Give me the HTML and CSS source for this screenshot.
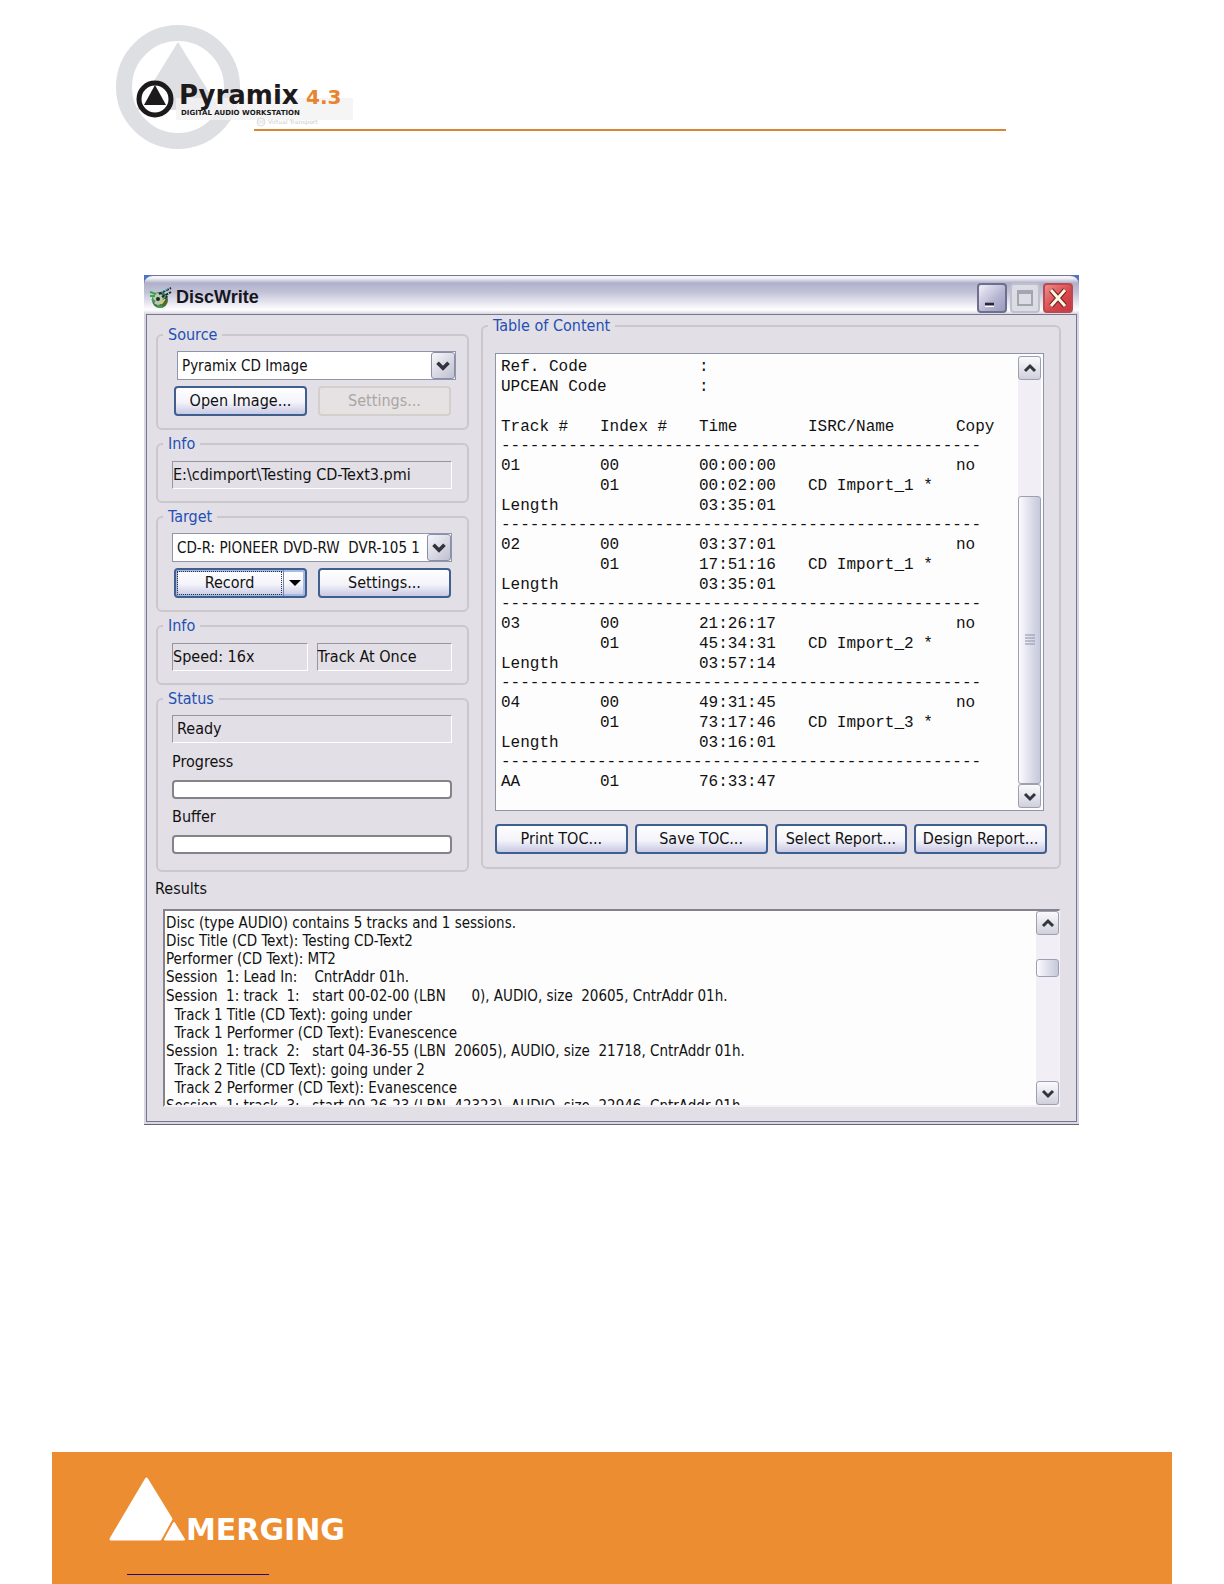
FILE: index.html
```
<!DOCTYPE html>
<html lang="en">

<head>
    <meta charset="UTF-8">
    <meta name="viewport" content="width=device-width, initial-scale=1.0">
    <title>Pyramix 4.3 - DiscWrite</title>
    <link rel="stylesheet" href="styles.css">
</head>

<body>
    <header class="page-header">
        <svg class="logo" width="138" height="125" viewBox="0 0 138 125" role="img" aria-label="Pyramix 4.3">
            <circle cx="62" cy="63" r="54" fill="none" stroke="#dedfe3" stroke-width="16" />
            <path d="M62 18 L104 86 H20 Z" fill="#dedfe3" />
            <rect x="60" y="74" width="177" height="22" fill="#f3f3f4" opacity="0.8" />
            <circle cx="39" cy="75" r="16" fill="#fff" stroke="#1c1a1b" stroke-width="5" />
            <path d="M39 61 L50 81 H28 Z" fill="#1c1a1b" />
            <text class="logo-name" x="63" y="80">Pyramix</text>
            <text class="logo-version" x="190" y="80">4.3</text>
            <text class="logo-tag" x="65" y="91">DIGITAL AUDIO WORKSTATION</text>
            <circle cx="145" cy="98" r="4" fill="none" stroke="#dcdcdc" />
            <path d="M143 96 V100 M145 96 V100 M147 96 V100" stroke="#e0e0e0" />
            <text class="logo-ghost" x="152" y="100">Virtual Transport</text>
        </svg>
        <div class="rule"></div>
    </header>

    <main class="window">
        <div class="title-back">
            <div class="titlebar">
                <svg width="24" height="24" viewBox="0 0 24 24">
                    <ellipse cx="11" cy="14" rx="8" ry="8" fill="#4d6a3c" />
                    <ellipse cx="9" cy="13" rx="5" ry="6" fill="#b9c9b4" />
                    <circle cx="9" cy="13" r="2" fill="#1d2b1d" />
                    <path d="M1 6 L7 8 M1 10 H6 M3 13 L6 16 M8 20 L14 21" stroke="#36a552" stroke-width="2" />
                    <path d="M10 8 L22 2 M13 11 L22 6 M15 15 L18 10" stroke="#172b28" stroke-width="2" stroke-dasharray="3 1" />
                    <path d="M12 6 L19 3 M14 13 L17 9" stroke="#37b5bf" stroke-width="1" />
                    <path d="M12 18 L16 13" stroke="#d9cf5c" stroke-width="2" />
                </svg>
                <h1>DiscWrite</h1>
                <button class="win-btn" aria-label="Minimize">
                    <svg width="26" height="26" viewBox="0 0 26 26"><path d="M6 19.500 H15" stroke="#fff" stroke-width="5" /><path d="M6 19 H15" stroke="#26263f" stroke-width="3" /></svg>
                </button>
                <button class="win-btn off" aria-label="Maximize" disabled>
                    <svg width="26" height="26" viewBox="0 0 26 26"><path d="M6 6 H20 V20 H6 Z M6 8 H20" fill="none" stroke="#a4a5b0" stroke-width="2" /></svg>
                </button>
                <button class="win-btn close" aria-label="Close">
                    <svg width="26" height="26" viewBox="0 0 26 26"><path d="M6 5 L20 21 M20 5 L6 21" stroke="#6b2020" stroke-width="5" /><path d="M6 5 L20 21 M20 5 L6 21" stroke="#fff6e6" stroke-width="3" /></svg>
                </button>
            </div>
        </div>

        <div class="body">
            <div class="columns">
                <div class="left">
                    <fieldset>
                        <legend>Source</legend>
                        <div class="combo wide">
                            <select aria-label="Source">
                                <option>Pyramix CD Image</option>
                            </select>
                            <svg class="drop" width="24" height="26" viewBox="0 0 24 26"><path d="M6 10 L12 16 L18 10" /></svg>
                        </div>
                        <div class="buttons">
                            <button class="btn">Open Image...</button>
                            <button class="btn" disabled>Settings...</button>
                        </div>
                    </fieldset>

                    <fieldset class="info">
                        <legend>Info</legend>
                        <div class="field">E:\cdimport\Testing CD-Text3.pmi</div>
                    </fieldset>

                    <fieldset>
                        <legend>Target</legend>
                        <div class="combo">
                            <select aria-label="Target">
                                <option>CD-R: PIONEER DVD-RW&nbsp; DVR-105 1</option>
                            </select>
                            <svg class="drop" width="24" height="26" viewBox="0 0 24 26"><path d="M6 10 L12 16 L18 10" /></svg>
                        </div>
                        <div class="buttons">
                            <div class="split">
                                <button class="record"><span>Record</span></button>
                                <button class="more" aria-label="Record options">
                                    <svg width="12" height="6" viewBox="0 0 12 6"><path d="M0 0 H12 L6 6 Z" /></svg>
                                </button>
                            </div>
                            <button class="btn">Settings...</button>
                        </div>
                    </fieldset>

                    <fieldset class="info">
                        <legend>Info</legend>
                        <div class="pair">
                            <div class="field">Speed: 16x</div>
                            <div class="field">Track At Once</div>
                        </div>
                    </fieldset>

                    <fieldset class="status">
                        <legend>Status</legend>
                        <div class="field ready">Ready</div>
                        <p id="progress">Progress</p>
                        <div class="bar" role="progressbar" aria-labelledby="progress"></div>
                        <p id="buffer">Buffer</p>
                        <div class="bar" role="progressbar" aria-labelledby="buffer"></div>
                    </fieldset>
                </div>

                <fieldset class="toc">
                    <legend>Table of Content</legend>
                    <div class="list">
                        <div class="list-text">
                            <table>
                                <colgroup>
                                    <col class="c1"><col class="c1"><col class="c3"><col class="c4"><col>
                                </colgroup>
                                <tr><td colspan="2">Ref. Code</td><td>:</td><td></td><td></td></tr>
                                <tr><td colspan="2">UPCEAN Code</td><td>:</td><td></td><td></td></tr>
                                <tr><td colspan="5">&nbsp;</td></tr>
                                <tr><td>Track #</td><td>Index #</td><td>Time</td><td>ISRC/Name</td><td>Copy</td></tr>
                                <tr class="dash"><td colspan="5">--------------------------------------------------</td></tr>
                                <tr><td>01</td><td>00</td><td>00:00:00</td><td></td><td>no</td></tr>
                                <tr><td></td><td>01</td><td>00:02:00</td><td>CD Import_1 *</td><td></td></tr>
                                <tr><td>Length</td><td></td><td>03:35:01</td><td></td><td></td></tr>
                                <tr class="dash"><td colspan="5">--------------------------------------------------</td></tr>
                                <tr><td>02</td><td>00</td><td>03:37:01</td><td></td><td>no</td></tr>
                                <tr><td></td><td>01</td><td>17:51:16</td><td>CD Import_1 *</td><td></td></tr>
                                <tr><td>Length</td><td></td><td>03:35:01</td><td></td><td></td></tr>
                                <tr class="dash"><td colspan="5">--------------------------------------------------</td></tr>
                                <tr><td>03</td><td>00</td><td>21:26:17</td><td></td><td>no</td></tr>
                                <tr><td></td><td>01</td><td>45:34:31</td><td>CD Import_2 *</td><td></td></tr>
                                <tr><td>Length</td><td></td><td>03:57:14</td><td></td><td></td></tr>
                                <tr class="dash"><td colspan="5">--------------------------------------------------</td></tr>
                                <tr><td>04</td><td>00</td><td>49:31:45</td><td></td><td>no</td></tr>
                                <tr><td></td><td>01</td><td>73:17:46</td><td>CD Import_3 *</td><td></td></tr>
                                <tr><td>Length</td><td></td><td>03:16:01</td><td></td><td></td></tr>
                                <tr class="dash"><td colspan="5">--------------------------------------------------</td></tr>
                                <tr><td>AA</td><td>01</td><td>76:33:47</td><td></td><td></td></tr>
                            </table>
                        </div>
                        <div class="scroll">
                            <button aria-label="Scroll up"><svg width="18" height="18" viewBox="0 0 18 18"><path d="M4 12 L9 7 L14 12" /></svg></button>
                            <div class="track end">
                                <div class="thumb long">
                                    <svg width="10" height="12" viewBox="0 0 10 12"><path d="M0 1 H10 M0 4 H10 M0 7 H10 M0 10 H10" /></svg>
                                </div>
                            </div>
                            <button aria-label="Scroll down"><svg width="18" height="18" viewBox="0 0 18 18"><path d="M4 7 L9 12 L14 7" /></svg></button>
                        </div>
                    </div>
                    <div class="buttons report">
                        <button class="btn">Print TOC...</button>
                        <button class="btn">Save TOC...</button>
                        <button class="btn">Select Report...</button>
                        <button class="btn">Design Report...</button>
                    </div>
                </fieldset>
            </div>

            <h2>Results</h2>
            <div class="results">
                <div class="log">
                    <div>Disc (type AUDIO) contains 5 tracks and 1 sessions.</div>
                    <div>Disc Title (CD Text): Testing CD-Text2</div>
                    <div>Performer (CD Text): MT2</div>
                    <div class="session">Session  1: Lead In:    CntrAddr 01h.</div>
                    <div class="session">Session  1: track  1:   start 00-02-00 (LBN      0), AUDIO, size  20605, CntrAddr 01h.</div>
                    <div>  Track 1 Title (CD Text): going under</div>
                    <div>  Track 1 Performer (CD Text): Evanescence</div>
                    <div class="session">Session  1: track  2:   start 04-36-55 (LBN  20605), AUDIO, size  21718, CntrAddr 01h.</div>
                    <div>  Track 2 Title (CD Text): going under 2</div>
                    <div>  Track 2 Performer (CD Text): Evanescence</div>
                    <div class="session">Session  1: track  3:   start 09-26-23 (LBN  42323), AUDIO, size  22946, CntrAddr 01h.</div>
                </div>
                <div class="scroll">
                    <button aria-label="Scroll up"><svg width="18" height="18" viewBox="0 0 18 18"><path d="M4 12 L9 7 L14 12" /></svg></button>
                    <div class="track">
                        <div class="thumb short"></div>
                    </div>
                    <button aria-label="Scroll down"><svg width="18" height="18" viewBox="0 0 18 18"><path d="M4 7 L9 12 L14 7" /></svg></button>
                </div>
            </div>
        </div>
    </main>

    <footer class="page-footer">
        <svg width="250" height="76" viewBox="0 0 250 76" role="img" aria-label="Merging">
            <path d="M38.500 3 L63 43 L52 63 H3 Z" fill="#fff" stroke="#fff" stroke-width="3" stroke-linejoin="round" />
            <path d="M66 47 L76 63.500 H57 Z" fill="#fff" stroke="#fff" stroke-width="2" stroke-linejoin="round" />
            <text class="merging" x="78" y="64">MERGING</text>
        </svg>
        <a class="site-link" href="#" aria-label="Merging website"></a>
    </footer>
</body>

</html>
```
FILE: styles.css
```
* {
    box-sizing: border-box;
}

body {
    margin: 0;
    min-height: 100vh;
    display: flex;
    flex-direction: column;
    background: #ffffff;
    font-family: "DejaVu Sans Condensed", "DejaVu Sans", sans-serif;
    font-size: 15px;
    line-height: 18px;
    color: #111111;
}

button, select {
    font: inherit;
    color: inherit;
    padding: 0;
    margin: 0;
}

/* page header */
.page-header {
    display: flex;
    margin: 24px 218px 126px 116px;
}

.logo {
    overflow: visible;
    flex: none;
}

.logo-name {
    font: bold 26px "DejaVu Sans", sans-serif;
    fill: #1c1a1b;
}

.logo-version {
    font: bold 20px "DejaVu Sans", sans-serif;
    fill: #e8832f;
}

.logo-tag {
    font: bold 7px "DejaVu Sans", sans-serif;
    fill: #1c1a1b;
}

.logo-ghost {
    font: 6px "DejaVu Sans", sans-serif;
    fill: #cccccc;
}

.rule {
    flex: 1;
    margin-top: 105px;
    border-top: 2px solid #d98632;
}

/* window */
.window {
    margin: 0 145px 40px 144px;
    padding: 0 2px 2px;
    background: #d8d7e6;
    border-bottom: 1px solid #666672;
}

.title-back {
    margin: 0 -2px;
    background: #4a74c9;
}

.titlebar {
    display: flex;
    align-items: center;
    gap: 3px;
    height: 39px;
    padding: 5px 6px 0 5px;
    border-top: 1px solid #77778c;
    border-radius: 9px 9px 0 0;
    background: linear-gradient(#f4f4fa 0, #f4f4fa 2px, #b0b0ca 7px, #c2c2d7 16px, #e4e4ef 26px, #ffffff 34px, #d5d5e2 38px);
}

.titlebar h1 {
    flex: 1;
    margin: 0;
    font: bold 18px "Liberation Sans", sans-serif;
    color: #16161e;
}

.win-btn {
    width: 30px;
    height: 30px;
    display: flex;
    align-items: center;
    justify-content: center;
    border: 2px solid #6e6e8f;
    border-radius: 4px;
    background: linear-gradient(135deg, #f0f0fa, #b4b4d2 60%, #9a9abc);
}

.win-btn.off {
    border-color: #c0c0cc;
    background: #dcdde4;
}

.win-btn.close {
    border-color: #b84a52;
    background: linear-gradient(135deg, #ee8d88, #d8444a 60%, #c8383f);
}

.body {
    padding: 2px 15px 14px 9px;
    border: 1px solid #77778c;
    background: #e3dfe6;
}

.columns {
    display: flex;
    align-items: flex-start;
    gap: 12px;
}

.left {
    width: 313px;
    flex: none;
    display: flex;
    flex-direction: column;
    gap: 5px;
    padding-top: 9px;
}

fieldset {
    min-width: 0;
    margin: 0;
    padding: 7px 15px 12px 14px;
    border: 2px solid #cbc8cd;
    border-radius: 6px;
}

legend {
    margin-left: -9px;
    padding: 0 5px;
    font-size: 16px;
    color: #2450b4;
}

fieldset.info {
    padding-top: 8px;
}

fieldset.status {
    padding-bottom: 16px;
}

/* controls */
.combo {
    position: relative;
    margin-bottom: 6px;
}

.combo.wide {
    margin-left: 5px;
    margin-right: -4px;
}

.combo select {
    display: block;
    width: 100%;
    height: 29px;
    padding: 0 25px 0 4px;
    appearance: none;
    border: 1px solid #8f95ab;
    border-radius: 0;
    background: #ffffff;
}

.drop {
    position: absolute;
    top: 1px;
    right: 1px;
    height: 27px;
    border: 1px solid #8c8ea6;
    border-radius: 3px;
    background: linear-gradient(135deg, #f6f6fb, #bfc0d0);
    pointer-events: none;
}

.drop path, .scroll button path {
    fill: none;
    stroke: #34343e;
    stroke-width: 4;
}

.buttons {
    display: flex;
    gap: 11px;
    margin: 0 1px 0 2px;
    font-size: 16px;
}

.btn, .split {
    flex: 1 1 0;
    min-width: 0;
    height: 30px;
    border: 2px solid #3f5f8f;
    border-radius: 4px;
    background: linear-gradient(#ffffff, #f3f3fa 55%, #c9c9e4);
}

.btn {
    white-space: nowrap;
}

.btn:disabled {
    border-color: #d3d0cc;
    background: #e6e2e3;
    color: #aaa6a4;
}

.split {
    display: flex;
    box-shadow: inset 0 0 0 2px #a5bbe6;
}

.split button {
    border: none;
    background: none;
}

.split .record {
    flex: 1;
    padding: 1px;
}

.record span {
    display: block;
    line-height: 22px;
    border: 1px dotted #333333;
}

.split .more {
    width: 22px;
    border-left: 1px solid #7087b5;
}

.more svg {
    display: block;
    margin: 0 auto;
}

.field {
    flex: 1;
    height: 28px;
    font-size: 16px;
    line-height: 26px;
    white-space: nowrap;
    border: 1px solid;
    border-color: #98959e #ffffff #ffffff #98959e;
}

.field.ready {
    margin-bottom: 10px;
    padding-left: 4px;
}

.pair {
    display: flex;
    gap: 9px;
}

.status p {
    margin: 9px 0;
    font-size: 16px;
}

.bar {
    height: 19px;
    border: 2px solid #85838a;
    border-radius: 4px;
    background: #ffffff;
}

/* table of content */
.toc {
    flex: 1;
    padding: 18px 12px 13px;
}

.toc legend {
    margin-left: -7px;
}

.list {
    display: flex;
    height: 458px;
    margin: 0 3px 13px 0;
    padding: 2px;
    border: 1px solid #8d96a8;
    background: #fdfdfd;
}

.list-text {
    flex: 1;
    min-width: 0;
    overflow: hidden;
    padding: 1px 0 0 3px;
}

.list table {
    width: 500px;
    table-layout: fixed;
    border-collapse: collapse;
    font-family: "Liberation Mono", monospace;
    font-size: 16px;
    line-height: 20px;
}

.list td {
    padding: 0;
    white-space: nowrap;
}

.list .dash td {
    line-height: 19px;
}

.c1 {
    width: 99px;
}

.c3 {
    width: 109px;
}

.c4 {
    width: 148px;
}

.buttons.report {
    gap: 7px;
    margin: 0;
}

/* scroll bars */
.scroll {
    flex: none;
    width: 23px;
    display: flex;
    flex-direction: column;
    background: #f1eff5;
}

.scroll button {
    height: 24px;
    display: flex;
    align-items: center;
    justify-content: center;
    border: 1px solid #9ea0b2;
    border-radius: 3px;
    background: linear-gradient(#fafafd, #cfd0db);
}

.scroll button path {
    stroke-width: 3;
}

.track {
    flex: 1;
    display: flex;
    flex-direction: column;
}

.track.end {
    justify-content: flex-end;
}

.thumb {
    display: flex;
    align-items: center;
    justify-content: center;
    border: 1px solid #9ea0b2;
    border-radius: 3px;
    background: linear-gradient(90deg, #fbfbfe, #dfe0ec 50%, #c6c9dc);
}

.thumb path {
    stroke: #8c90a6;
}

.thumb.long {
    height: 288px;
}

.thumb.short {
    height: 18px;
    margin-top: 24px;
}

/* results */
h2 {
    margin: 8px 0 11px -1px;
    font-size: 16px;
    line-height: 18px;
    font-weight: normal;
}

.results {
    display: flex;
    height: 198px;
    margin-left: 7px;
    margin-right: 1px;
    border: solid;
    border-width: 2px 1px 2px 2px;
    border-color: #85838a #f4f2f6 #f4f2f6 #85838a;
    background: #fdfdfd;
}

.log {
    flex: 1;
    min-width: 0;
    overflow: hidden;
    padding: 3px 0 0 1px;
}

.log div {
    white-space: pre;
}

.log .session {
    line-height: 19px;
}

/* footer */
.page-footer {
    margin: auto 52px 0;
    height: 132px;
    padding: 24px 56px 0;
    background: #ed8d31;
}

.page-footer svg {
    display: block;
}

.merging {
    font: bold 30px "DejaVu Sans", sans-serif;
    fill: #ffffff;
}

.site-link {
    display: block;
    width: 142px;
    height: 23px;
    margin-left: 19px;
    border-bottom: 1px solid #1d0f7a;
}
```
